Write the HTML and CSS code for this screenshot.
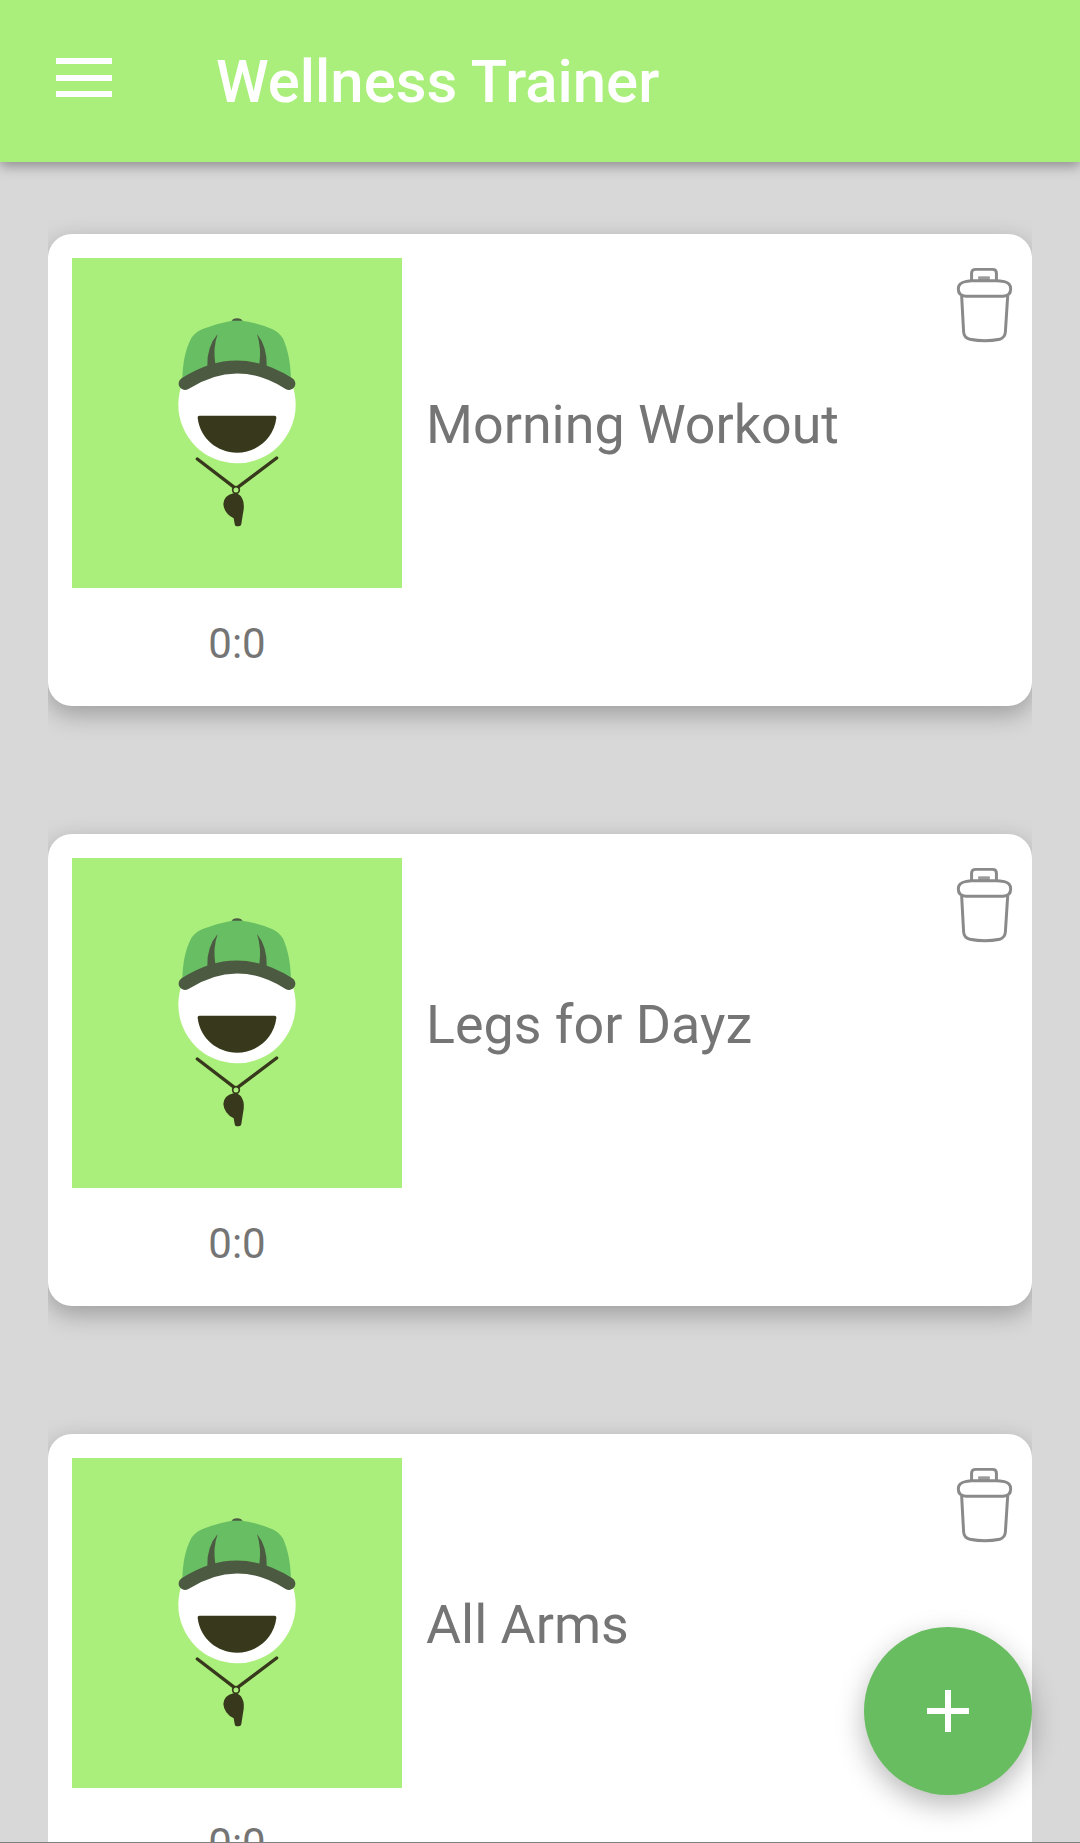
FILE: index.html
```html
<!DOCTYPE html>
<html lang="en">
<head>
  <meta charset="UTF-8">
  <meta name="viewport" content="width=device-width, initial-scale=1.0">
  <title>Wellness Trainer</title>
  <link rel="stylesheet" href="styles.css">
</head>
<body>

<!-- Shared icons -->
<svg class="icon-defs" xmlns="http://www.w3.org/2000/svg">
  <symbol id="trainer" viewBox="-234 -126 990 990">
    <circle cx="261" cy="314" r="176" fill="#fff"/>
    <path d="M245 64 Q247 55 261 55 Q275 55 278 64 Z" fill="#4c5a42"/>
    <path d="M97 240 C98 190 106 150 122 118 Q132 98 158 87 Q200 70 245 62 L278 62 Q325 70 366 87 Q390 98 400 118 C414 150 422 190 423 240 Q261 170 97 240 Z" fill="#68be62"/>
    <path d="M203 102 Q170 140 172 198 L196 192 Q188 145 203 102 Z" fill="#4c5a42"/>
    <path d="M321 102 Q352 140 350 198 L328 192 Q335 145 321 102 Z" fill="#4c5a42"/>
    <path d="M105 251 Q261 151 417 251" fill="none" stroke="#4c5a42" stroke-width="38" stroke-linecap="round"/>
    <path d="M148 347 L374 347 Q380 347 379 354 C372 415 320 458 261 458 C202 458 150 415 143 354 Q142 347 148 347 Z" fill="#38391c"/>
    <path d="M142 477 L250 560 M380 474 L266 560" stroke="#38391c" stroke-width="10" stroke-linecap="round" fill="none"/>
    <circle cx="258" cy="570" r="10" fill="none" stroke="#38391c" stroke-width="5"/>
    <path d="M250 580 Q270 580 277 596 Q285 612 279 640 L274 672 Q273 679 266 679 L260 679 Q255 679 254 672 L251 655 Q222 640 220 612 Q222 586 250 580 Z" fill="#38391c"/>
  </symbol>
  <symbol id="trash" viewBox="108 140 172 230">
    <path d="M155 181 L155 158 Q155 146 168 146 L218 146 Q230 146 230 158 L230 181" fill="none" stroke="#8a8a8a" stroke-width="9"/>
    <rect x="175" y="167" width="35" height="16" fill="#9a9a9a"/>
    <path d="M136 183 Q150 180 155 180 L230 180 Q240 180 254 183 Q273 187 273 205 Q273 226 250 227 L138 227 Q115 226 115 205 Q115 187 136 183 Z" fill="none" stroke="#8a8a8a" stroke-width="9"/>
    <path d="M125 226 L131 335 Q132 352 150 357 Q195 366 240 357 Q256 352 257 335 L264 226" fill="none" stroke="#8a8a8a" stroke-width="9"/>
  </symbol>
</svg>

<header class="app-bar">
  <div class="menu-btn">
    <span></span>
    <span></span>
    <span></span>
  </div>
  <h1>Wellness Trainer</h1>
</header>

<main class="lista">
  <div class="card-clip">
    <article class="card">
      <div class="thumb-col">
        <div class="thumb"><svg><use href="#trainer"/></svg></div>
        <p class="time">0:0</p>
      </div>
      <h2 class="card-title">Morning Workout</h2>
      <svg class="trash"><use href="#trash"/></svg>
    </article>
  </div>

  <div class="card-clip">
    <article class="card">
      <div class="thumb-col">
        <div class="thumb"><svg><use href="#trainer"/></svg></div>
        <p class="time">0:0</p>
      </div>
      <h2 class="card-title">Legs for Dayz</h2>
      <svg class="trash"><use href="#trash"/></svg>
    </article>
  </div>

  <div class="card-clip">
    <article class="card">
      <div class="thumb-col">
        <div class="thumb"><svg><use href="#trainer"/></svg></div>
        <p class="time">0:0</p>
      </div>
      <h2 class="card-title">All Arms</h2>
      <svg class="trash"><use href="#trash"/></svg>
    </article>
  </div>
</main>

<button class="fab" aria-label="Add"><span></span></button>

</body>
</html>
```

FILE: styles.css
```css
html {
  height: 100%;
  overflow: hidden;
}

body {
  position: relative;
  box-sizing: border-box;
  height: 1843px;
  margin: 0;
  overflow: hidden;
  background-color: #d8d8d8;
  border-bottom: 1px solid #808080;
  font-family: Roboto, "Liberation Sans", sans-serif;
}

.icon-defs {
  display: none;
}

.app-bar {
  position: relative;
  z-index: 2;
  display: flex;
  align-items: center;
  height: 162px;
  padding-left: 56px;
  background-color: #aaef7b;
  box-shadow: 0 4px 12px rgba(0, 0, 0, 0.35);
}

.menu-btn {
  display: flex;
  flex-direction: column;
  gap: 10.5px;
  width: 56px;
  margin-top: -7px;
}

.menu-btn span {
  height: 6px;
  background-color: #fff;
}

.app-bar h1 {
  margin: 0 0 0 104px;
  color: #fff;
  font-size: 59.85px;
  font-weight: 500;
}

.lista {
  padding-top: 32px;
}

/* The shadow stops at the card's left and right edges */
.card-clip {
  margin: 0 48px 48px;
  padding: 40px 0;
  overflow: hidden;
}

.card {
  display: flex;
  box-sizing: border-box;
  height: 472px;
  padding: 24px;
  background-color: #fff;
  border-radius: 24px;
  box-shadow: 0 8px 24px rgba(0, 0, 0, 0.28);
}

.thumb-col {
  width: 330px;
  flex-shrink: 0;
}

.thumb {
  height: 330px;
  background-color: #aaef7b;
}

.thumb svg {
  display: block;
  width: 330px;
  height: 330px;
}

.time {
  margin: 31px 0 0;
  color: #757575;
  font-size: 42px;
  line-height: 50px;
  text-align: center;
}

.card-title {
  flex: 1;
  align-self: flex-start;
  height: 330px;
  margin: 2px 0 0 24px;
  color: #757575;
  font-size: 53.8px;
  font-weight: 400;
  line-height: 330px;
}

.trash {
  flex-shrink: 0;
  width: 57px;
  height: 77px;
  margin: 9px -5px 0 0;
}

.fab {
  position: absolute;
  right: 48px;
  bottom: 47px;
  z-index: 3;
  width: 168px;
  height: 168px;
  padding: 0;
  background-color: #67bd5f;
  border: none;
  border-radius: 50%;
  box-shadow: 0 10px 28px rgba(0, 0, 0, 0.28);
}

/* Plus sign */
.fab span {
  display: block;
  position: relative;
  width: 42px;
  height: 6px;
  margin: 0 auto;
  background-color: #fff;
}

.fab span::after {
  content: "";
  position: absolute;
  left: 18px;
  top: -18px;
  width: 6px;
  height: 42px;
  background-color: #fff;
}
```
